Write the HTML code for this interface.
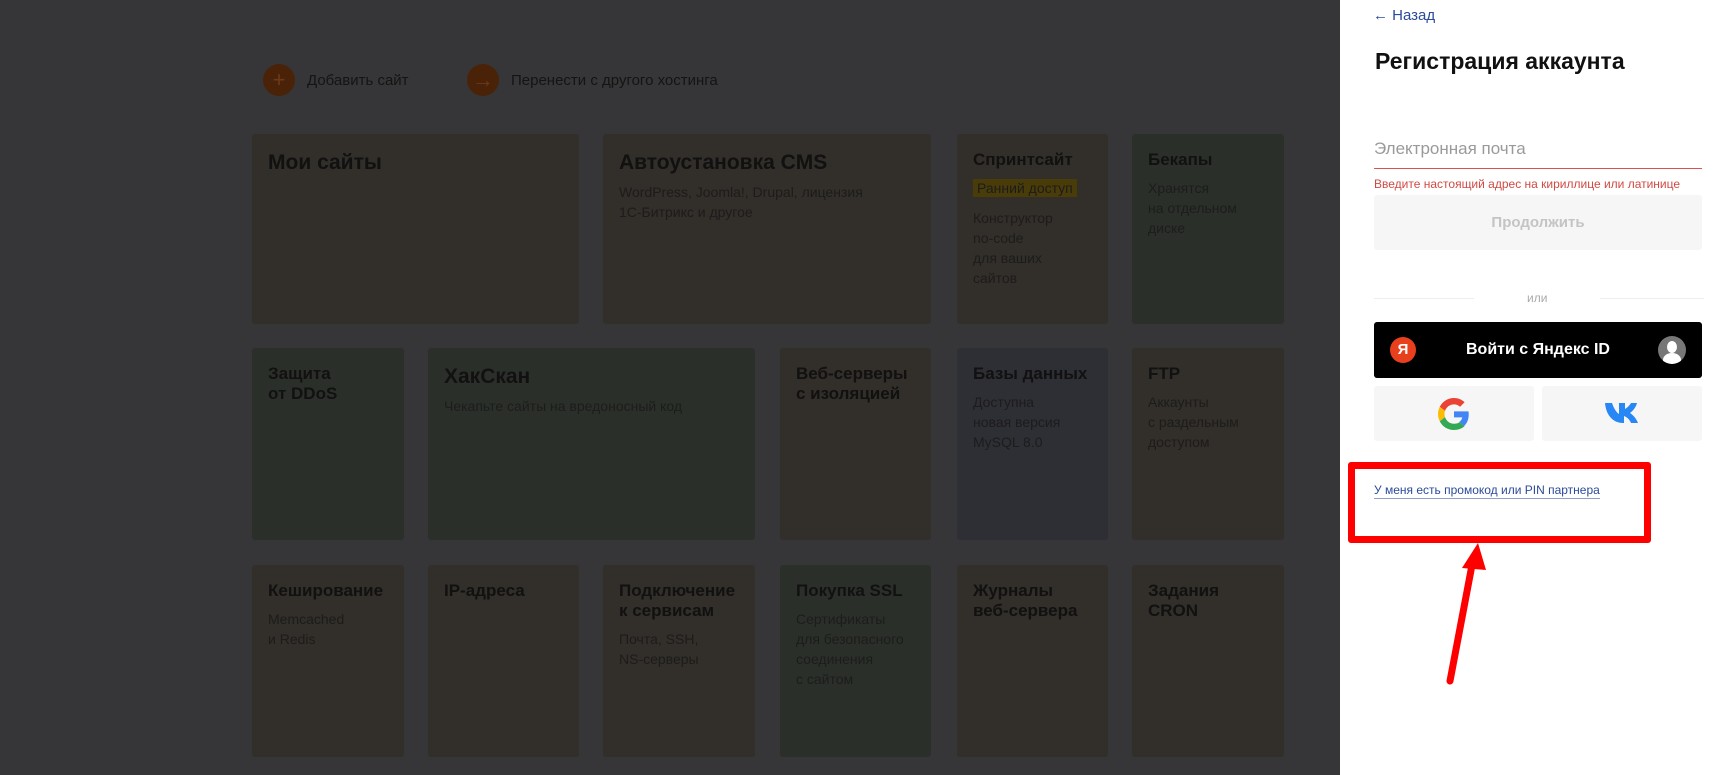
<!DOCTYPE html>
<html><head><meta charset="utf-8"><style>
*{margin:0;padding:0;box-sizing:border-box}
body{width:1720px;height:775px;overflow:hidden;background:#363638;font-family:"Liberation Sans","DejaVu Sans",sans-serif;position:relative}
.c{position:absolute;border-radius:3px;padding:16px 16px;color:#141414}
.b{background:#322e29}.g{background:#2b2f2a}.u{background:#2e2e35}
.c h3{font-size:17px;font-weight:bold;line-height:20px;margin-bottom:8px;color:#111}
.c h2{font-size:21px;font-weight:bold;line-height:26px;margin-bottom:6px;color:#111}
.c p{font-size:14px;line-height:20px;color:#1c1c1c}
.tl{position:absolute;top:64px;font-size:15px;color:#141414;display:flex;align-items:center}
.tl i{width:32px;height:32px;border-radius:50%;background:#4a2208;color:#6b3a1a;display:inline-flex;align-items:center;justify-content:center;font-style:normal;font-size:22px;margin-right:12px}
.side{position:absolute;left:1340px;top:0;width:380px;height:775px;background:#fff}
.s{position:absolute}
</style></head><body>
<div class="tl" style="left:263px"><i>+</i>Добавить сайт</div>
<div class="tl" style="left:467px"><i>→</i>Перенести с другого хостинга</div>

<div class="c b" style="left:252px;top:134px;width:327px;height:190px"><h2>Мои сайты</h2></div>
<div class="c b" style="left:603px;top:134px;width:328px;height:190px"><h2>Автоустановка CMS</h2><p>WordPress, Joomla!, Drupal, лицензия<br>1С-Битрикс и другое</p></div>
<div class="c b" style="left:957px;top:134px;width:151px;height:190px"><h3>Спринтсайт</h3><p><span style="background:#4a3c08;padding:1px 4px">Ранний доступ</span></p><p style="margin-top:10px">Конструктор<br>no-code<br>для ваших<br>сайтов</p></div>
<div class="c g" style="left:1132px;top:134px;width:152px;height:190px"><h3>Бекапы</h3><p>Хранятся<br>на отдельном<br>диске</p></div>

<div class="c g" style="left:252px;top:348px;width:152px;height:192px"><h3>Защита<br>от DDoS</h3></div>
<div class="c g" style="left:428px;top:348px;width:327px;height:192px"><h2>ХакСкан</h2><p>Чекапьте сайты на вредоносный код</p></div>
<div class="c b" style="left:780px;top:348px;width:151px;height:192px"><h3>Веб-серверы<br>с изоляцией</h3></div>
<div class="c u" style="left:957px;top:348px;width:151px;height:192px"><h3>Базы данных</h3><p>Доступна<br>новая версия<br>MySQL 8.0</p></div>
<div class="c b" style="left:1132px;top:348px;width:152px;height:192px"><h3>FTP</h3><p>Аккаунты<br>с раздельным<br>доступом</p></div>

<div class="c b" style="left:252px;top:565px;width:152px;height:192px"><h3>Кеширование</h3><p>Memcached<br>и Redis</p></div>
<div class="c b" style="left:428px;top:565px;width:151px;height:192px"><h3>IP-адреса</h3></div>
<div class="c b" style="left:603px;top:565px;width:152px;height:192px"><h3>Подключение<br>к сервисам</h3><p>Почта, SSH,<br>NS-серверы</p></div>
<div class="c g" style="left:780px;top:565px;width:151px;height:192px"><h3>Покупка SSL</h3><p>Сертификаты<br>для безопасного<br>соединения<br>с сайтом</p></div>
<div class="c b" style="left:957px;top:565px;width:151px;height:192px"><h3>Журналы<br>веб-сервера</h3></div>
<div class="c b" style="left:1132px;top:565px;width:152px;height:192px"><h3>Задания<br>CRON</h3></div>

<div class="side">
<div class="s" style="left:33px;top:7px;font-size:15px;color:#2b4a9a">← Назад</div>
<div class="s" style="left:35px;top:48px;font-size:23px;font-weight:bold;color:#111">Регистрация аккаунта</div>
<div class="s" style="left:34px;top:139px;font-size:17px;color:#9a9a9a">Электронная почта</div>
<div class="s" style="left:34px;top:168px;width:328px;height:1px;background:#d9534f"></div>
<div class="s" style="left:34px;top:177px;font-size:12px;color:#d04a43">Введите настоящий адрес на кириллице или латинице</div>
<div class="s" style="left:34px;top:195px;width:328px;height:55px;background:#f6f6f6;border-radius:3px;text-align:center;line-height:55px;font-size:15px;font-weight:bold;color:#c4c4c4">Продолжить</div>
<div class="s" style="left:34px;top:298px;width:100px;height:1px;background:#eee"></div>
<div class="s" style="left:260px;top:298px;width:104px;height:1px;background:#eee"></div>
<div class="s" style="left:187px;top:291px;font-size:12px;color:#aaa">или</div>
<div class="s" style="left:34px;top:322px;width:328px;height:56px;background:#000;border-radius:3px">
 <div class="s" style="left:16px;top:15px;width:26px;height:26px;border-radius:50%;background:#e8401c;color:#fff;font-weight:bold;font-size:15px;text-align:center;line-height:26px">Я</div>
 <div class="s" style="left:0;width:328px;top:0;height:56px;line-height:56px;text-align:center;color:#fff;font-size:16px;font-weight:bold">Войти с Яндекс ID</div>
 <div class="s" style="left:284px;top:14px;width:28px;height:28px;border-radius:50%;background:#777;overflow:hidden"><div style="position:absolute;left:9px;top:5px;width:10px;height:12px;border-radius:50%;background:#fff"></div><div style="position:absolute;left:5px;top:17px;width:18px;height:14px;border-radius:50% 50% 0 0;background:#fff"></div></div>
</div>
<div class="s" style="left:34px;top:386px;width:160px;height:55px;background:#f6f6f6;border-radius:3px">
 <svg style="position:absolute;left:64px;top:12px" width="32" height="32" viewBox="0 0 48 48"><path fill="#EA4335" d="M24 9.5c3.5 0 6.6 1.2 9.1 3.6l6.8-6.8C35.8 2.4 30.3 0 24 0 14.6 0 6.6 5.4 2.6 13.3l7.9 6.1C12.4 13.7 17.7 9.5 24 9.5z"/><path fill="#4285F4" d="M46.1 24.5c0-1.6-.1-3.1-.4-4.5H24v9h12.4c-.5 2.9-2.2 5.3-4.6 7l7.5 5.8c4.4-4 6.8-10 6.8-17.3z"/><path fill="#FBBC05" d="M10.5 28.6c-.5-1.4-.8-3-.8-4.6s.3-3.2.8-4.6l-7.9-6.1C1 16.5 0 20.1 0 24s1 7.5 2.6 10.7l7.9-6.1z"/><path fill="#34A853" d="M24 48c6.5 0 11.9-2.1 15.9-5.8l-7.5-5.8c-2.1 1.4-4.8 2.3-8.4 2.3-6.3 0-11.6-4.2-13.5-10l-7.9 6.1C6.6 42.6 14.6 48 24 48z"/></svg>
</div>
<div class="s" style="left:202px;top:386px;width:160px;height:55px;background:#f6f6f6;border-radius:3px">
 <svg style="position:absolute;left:63px;top:16px" width="34" height="22" viewBox="0 0 34 22"><path fill="#2787f5" d="M0 1h7c2 6 5 10 7 11V1h6v6c2-1 5-4 6-6h6c-1 4-4 8-7 10 3 2 6 5 8 10h-7c-1-3-4-6-7-7v7h-1C8 21 1 13 0 1z"/></svg>
</div>
<div class="s" style="left:34px;top:483px;font-size:12px;color:#2b4a9a;border-bottom:1px solid #8ea0c8;line-height:15px">У меня есть промокод или PIN партнера</div>
</div>

<div style="position:absolute;left:1348px;top:462px;width:303px;height:81px;border:7px solid #f00;border-radius:3px"></div>
<svg style="position:absolute;left:0;top:0" width="1720" height="775"><line x1="1450" y1="681" x2="1472" y2="565" stroke="#f00" stroke-width="7" stroke-linecap="round"/><polygon points="1478,543 1462,568 1486,570" fill="#f00"/></svg>
</body></html>
